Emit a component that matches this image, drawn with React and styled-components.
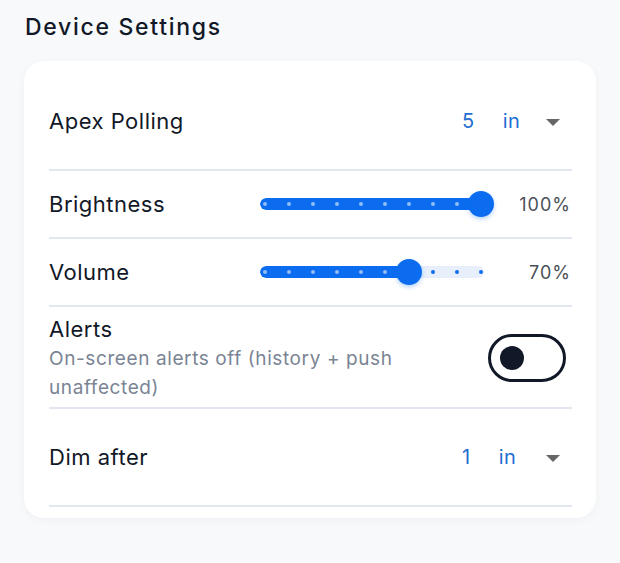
import React from "react";
import styled, { createGlobalStyle } from "styled-components";

const GlobalStyle = createGlobalStyle`
    html, body {
        margin: 0;
        background: #f7f9fb;
        font-family: Inter, "Noto Sans", sans-serif;
        color: #111827;
    }
`;

const Page = styled.div`
    padding: 11px 24px 45px;
`;

const Title = styled.h2`
    margin: 0 0 18px 1px;
    font-size: 23px;
    line-height: 32px;
    font-weight: 500;
    letter-spacing: 1.7px;
    color: #111827;
`;

const Card = styled.div`
    background: #fff;
    border-radius: 20px;
    padding: 12px 24px 11px 25px;
    box-shadow: 0 2px 8px rgba(16, 24, 40, 0.04);
`;

const Row = styled.div`
    display: flex;
    align-items: center;
    justify-content: space-between;
    min-height: ${(p) => p.$height}px;
    border-bottom: 2px solid #e2e7ef;
    box-sizing: border-box;
`;

const SliderRow = styled.div`
    display: grid;
    grid-template-columns: 211px 224px 1fr;
    align-items: center;
    height: 68px;
    border-bottom: 2px solid #e2e7ef;
    box-sizing: border-box;
`;

const Label = styled.div`
    font-size: 22px;
    line-height: 30px;
    letter-spacing: 0.5px;
    color: #111827;
`;

const Select = styled.div`
    width: 110px;
    display: flex;
    align-items: center;
    justify-content: space-between;
    padding-right: 12px;
    box-sizing: border-box;
`;

const SelectValue = styled.div`
    display: flex;
    gap: 28px;
    font-size: 20px;
    letter-spacing: 0.5px;
    color: #1f6fd1;
`;

const Arrow = styled.span`
    width: 0;
    height: 0;
    margin-top: 2px;
    border-left: 7px solid transparent;
    border-right: 7px solid transparent;
    border-top: 7px solid #666;
`;

const Track = styled.div`
    position: relative;
    height: 26px;
    display: flex;
    align-items: center;
`;

const Rail = styled.div`
    position: relative;
    width: 100%;
    height: 12px;
    border-radius: 6px;
    background: #e6effb;
    overflow: hidden;
`;

const Fill = styled.div`
    position: absolute;
    left: 0;
    top: 0;
    bottom: 0;
    background: #0b6cf0;
    border-radius: 6px;
`;

const Mark = styled.span`
    position: absolute;
    top: 50%;
    width: 4px;
    height: 4px;
    margin: -2px 0 0 -2px;
    border-radius: 50%;
    background: ${(p) => (p.$active ? "rgba(255,255,255,0.55)" : "#0b6cf0")};
`;

const Thumb = styled.span`
    position: absolute;
    top: 0;
    width: 26px;
    height: 26px;
    margin-left: -13px;
    border-radius: 50%;
    background: #0b6cf0;
    box-shadow: 0 2px 4px rgba(11, 108, 240, 0.3);
`;

const Percent = styled.div`
    justify-self: end;
    padding-right: 1px;
    font-size: 18px;
    letter-spacing: 1px;
    color: #4b5058;
`;

const AlertsRow = styled(Row)`
    padding: 7px 0 5px;
    min-height: 0;
`;

const TextCol = styled.div`
    width: 415px;
`;

const Sub = styled.div`
    font-size: 19px;
    line-height: 29px;
    letter-spacing: 0.6px;
    color: #7a8494;
`;

const Toggle = styled.div`
    width: 78px;
    height: 48px;
    margin-right: 6px;
    border: 3px solid #111827;
    border-radius: 24px;
    box-sizing: border-box;
    display: flex;
    align-items: center;
    padding-left: 9px;
`;

const Knob = styled.span`
    width: 24px;
    height: 24px;
    border-radius: 50%;
    background: #111827;
`;

function SelectRow({ label, value }) {
    return (
        <Row $height={98}>
            <Label>{label}</Label>
            <Select>
                <SelectValue>
                    <span>{value}</span>
                    <span>in</span>
                </SelectValue>
                <Arrow />
            </Select>
        </Row>
    );
}

function Slider({ value }) {
    const pos = (v) => 5 + ((v - 10) / 90) * 216;
    const marks = [10, 20, 30, 40, 50, 60, 70, 80, 90, 100];
    return (
        <Track>
            <Rail>
                <Fill style={{ width: pos(value) }} />
                {marks.map((m) => (
                    <Mark key={m} $active={m <= value} style={{ left: pos(m) }} />
                ))}
            </Rail>
            <Thumb style={{ left: pos(value) }} />
        </Track>
    );
}

export default function App() {
    return (
        <>
            <GlobalStyle />
            <Page>
                <Title>Device Settings</Title>
                <Card>
                    <SelectRow label="Apex Polling" value="5" />
                    <SliderRow>
                        <Label>Brightness</Label>
                        <Slider value={100} />
                        <Percent>100%</Percent>
                    </SliderRow>
                    <SliderRow>
                        <Label>Volume</Label>
                        <Slider value={70} />
                        <Percent>70%</Percent>
                    </SliderRow>
                    <AlertsRow>
                        <TextCol>
                            <Label>Alerts</Label>
                            <Sub>On-screen alerts off (history + push unaffected)</Sub>
                        </TextCol>
                        <Toggle>
                            <Knob />
                        </Toggle>
                    </AlertsRow>
                    <SelectRow label="Dim after" value="1" />
                </Card>
            </Page>
        </>
    );
}
